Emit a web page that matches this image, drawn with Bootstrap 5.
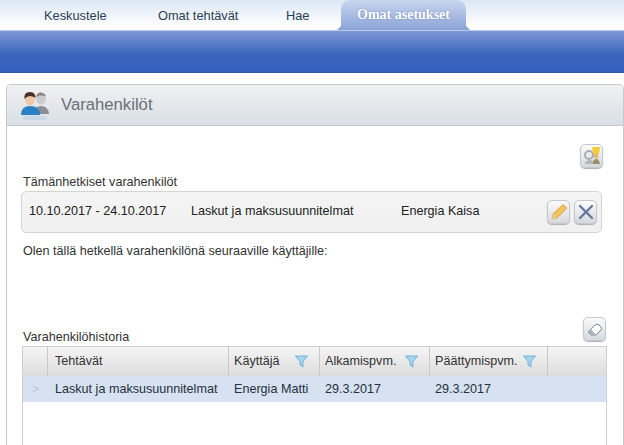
<!DOCTYPE html>
<html lang="fi">
<head>
<meta charset="utf-8">
<title>Varahenkilöt</title>
<link href="https://cdn.jsdelivr.net/npm/bootstrap@5.3.0/dist/css/bootstrap.min.css" rel="stylesheet">
<style>
html,body{height:445px;overflow:hidden;background:#fff}
body{font-family:"Liberation Sans",Arial,sans-serif;font-size:12.6px;color:#333;line-height:15px}
.topnav{height:31px;background:linear-gradient(#dce7f6,#fff 90%);border-bottom:1px solid #b9c8e4;padding-left:44px}
.topitem{color:#2b3f55;font-size:12.8px;text-decoration:none;line-height:31px}
.tab1{width:114px}.tab2{width:128px}.tab3{width:55px}
.topactive{width:125px;height:30px;background:linear-gradient(#c9d6ee,#8ba3d6);border-radius:9px 9px 0 0;color:#fff;font-family:"Liberation Serif",serif;font-weight:700;font-size:14px;text-align:center;line-height:30px;text-shadow:0 0 2px #6f87bb}
.topactive::before,.topactive::after{content:"";position:absolute;bottom:0;width:5px;height:5px;background:#8ba3d6}
.topactive::before{left:-4px;clip-path:polygon(100% 0,100% 100%,0 100%)}
.topactive::after{right:-4px;clip-path:polygon(0 0,100% 100%,0 100%)}
.band{height:42px;background:linear-gradient(#7e99d6,#3a64bd 58%,#3561bc);border-bottom:1px solid #2f57ad}
.panel{margin:11px 0 0 6px;width:618px;border:1px solid #c9c9c9;border-bottom:0;border-radius:5px 5px 0 0;background:#fff}
.panelhead{height:41px;background:linear-gradient(#f0f1f3,#d9dfe4);border-bottom:1px solid #c6c9cc;border-radius:5px 5px 0 0;padding-left:13px;gap:9px}
.paneltitle{font-size:16.7px;color:#6b7178;padding-top:1px}
.panelbody{padding:18px 15px 0 16px}
.rowend{height:24px;padding-right:5px}
.iconbtn{width:23px;height:24px;border:1px solid #c4c8cc;border-radius:5px;background:linear-gradient(#fafbfc,#d5d8dc);box-shadow:0 1px 1px #a9adb3;padding:0}
.lbl1{margin-top:7px;line-height:15px}
.curbox{width:581px;height:42px;margin:1px 0 0 -2px;background:linear-gradient(#f4f4f4,#f0f0f0);border:1px solid #d4d4d4;border-radius:5px;padding:0 4px 0 7px;color:#222}
.c1,.c2,.c3{padding-bottom:2px}
.c1{width:162px}.c2{width:210px}.c3{flex:1}
.gapbtn{gap:4px}
.lbl2{margin-top:11px;height:73px}
.histhead{width:583px;height:24px}
.hlabel{margin-bottom:-4px}
.hist{width:585px;margin:5px 0 0 -1px;border:1px solid #cfcfcf;border-bottom:0;height:120px}
.hrow{height:29px;background:linear-gradient(#f5f5f5,#dcdcdc);color:#333}
.hcell{border-right:1px solid #c9c9c9;padding-left:5px;padding-right:11px;line-height:29px}
.w0{width:25px}.w1{width:181px}.w2{width:91px}.w3{width:110px}.w4{width:118px}
.w1.hcell{padding-left:7px}
.drow{height:26px;background:#d6e2f2;line-height:26px;color:#26303b}
.dcell{padding-left:5px;white-space:nowrap}
.dcell.w0{padding-left:9px;color:#b9c3cf}
.w1.dcell{padding-left:7px}
.filt{display:block;flex:none}
</style>
</head>
<body>
<nav class="topnav d-flex align-items-start">
  <a class="topitem tab1" href="#">Keskustele</a>
  <a class="topitem tab2" href="#">Omat tehtävät</a>
  <a class="topitem tab3" href="#">Hae</a>
  <a class="topactive position-relative text-decoration-none" href="#">Omat asetukset</a>
</nav>
<div class="band"></div>
<section class="panel">
  <header class="panelhead d-flex align-items-center">
    <svg width="32" height="34" viewBox="0 0 32 34">
      <ellipse cx="21" cy="11" rx="5" ry="5.500" fill="#c9cccf"/>
      <path d="M16 9q1-5 5-4.500 4 .5 5 4-5-2-10 .5z" fill="#8b8480"/>
      <path d="M13 26q1-8 8-8 7 0 8 8z" fill="#8b8f95"/>
      <ellipse cx="10" cy="11.500" rx="5" ry="6" fill="#eec9a8"/>
      <path d="M4.500 11q-1-7 5.500-7 5.500 0 5.500 6-3-2-5.500-2-3 0-5.500 3z" fill="#4a2f22"/>
      <path d="M1 27q0-9 9-9 10 0 10 9z" fill="#2b7fc2"/>
      <rect x="3" y="28" width="24" height="4" rx="2" fill="#c9d8e4"/>
    </svg>
    <h1 class="paneltitle m-0 fw-normal">Varahenkilöt</h1>
  </header>
  <div class="panelbody">
    <div class="rowend d-flex justify-content-end">
      <button class="iconbtn d-flex align-items-center justify-content-center" type="button" aria-label="Lisää">
        <svg width="20" height="20" viewBox="0 0 20 20">
          <circle cx="7" cy="9" r="4" fill="none" stroke="#a8acb1" stroke-width="2"/>
          <path d="M3 18q1-4 5-4t4 4z" fill="#b4b7bb"/>
          <path d="M10 1h8l-1 7h-6z" fill="#f4cd3a"/>
          <circle cx="14" cy="10" r="2.500" fill="#e8b56f"/>
          <path d="M11 18q0-5 3-5t4 5z" fill="#9b8f6a"/>
        </svg>
      </button>
    </div>
    <div class="lbl1">Tämänhetkiset varahenkilöt</div>
    <div class="curbox d-flex align-items-center">
      <span class="c1">10.10.2017 - 24.10.2017</span>
      <span class="c2">Laskut ja maksusuunnitelmat</span>
      <span class="c3">Energia Kaisa</span>
      <div class="d-flex gapbtn">
        <button class="iconbtn d-flex align-items-center justify-content-center" type="button" aria-label="Muokkaa">
          <svg width="20" height="20" viewBox="0 0 20 20">
            <path d="M3 17l1-5L14 2.500l4 3.500L8 16z" fill="#f2c25c" stroke="#d49d36" stroke-width=".8"/>
            <path d="M3 17l1-5 4 4z" fill="#e3c9a0"/>
          </svg>
        </button>
        <button class="iconbtn d-flex align-items-center justify-content-center" type="button" aria-label="Poista">
          <svg width="18" height="18" viewBox="0 0 18 18">
            <path d="M3 3l12 12M15 3L3 15" stroke="#64799f" stroke-width="2.400" stroke-linecap="round"/>
          </svg>
        </button>
      </div>
    </div>
    <div class="lbl2">Olen tällä hetkellä varahenkilönä seuraaville käyttäjille:</div>
    <div class="histhead d-flex justify-content-between align-items-end">
      <div class="hlabel">Varahenkilöhistoria</div>
      <button class="iconbtn d-flex align-items-center justify-content-center" type="button" aria-label="Tyhjennä">
        <svg width="20" height="20" viewBox="0 0 20 20">
          <path d="M3 13l7-7q2-1.500 4 0l2 2q1 2 0 3l-5 5H6z" fill="#fff" stroke="#7d8794" stroke-width="1"/>
          <path d="M3 13l3-3 5 6H6z" fill="#aab6c6"/>
        </svg>
      </button>
    </div>
    <div class="hist">
      <div class="hrow d-flex">
        <div class="hcell w0"></div>
        <div class="hcell w1">Tehtävät</div>
        <div class="hcell w2 d-flex align-items-center justify-content-between">Käyttäjä
          <svg class="filt" width="13" height="13" viewBox="0 0 13 13"><path d="M.5 1h12L8 6.500V12L5 10V6.500z" fill="#a6d5ef" stroke="#5ba6d2" stroke-width=".8"/></svg></div>
        <div class="hcell w3 d-flex align-items-center justify-content-between">Alkamispvm.
          <svg class="filt" width="13" height="13" viewBox="0 0 13 13"><path d="M.5 1h12L8 6.500V12L5 10V6.500z" fill="#a6d5ef" stroke="#5ba6d2" stroke-width=".8"/></svg></div>
        <div class="hcell w4 d-flex align-items-center justify-content-between">Päättymispvm.
          <svg class="filt" width="13" height="13" viewBox="0 0 13 13"><path d="M.5 1h12L8 6.500V12L5 10V6.500z" fill="#a6d5ef" stroke="#5ba6d2" stroke-width=".8"/></svg></div>
      </div>
      <div class="drow d-flex">
        <div class="dcell w0">&gt;</div>
        <div class="dcell w1">Laskut ja maksusuunnitelmat</div>
        <div class="dcell w2">Energia Matti</div>
        <div class="dcell w3">29.3.2017</div>
        <div class="dcell w4">29.3.2017</div>
      </div>
    </div>
  </div>
</section>
<script src="https://cdn.jsdelivr.net/npm/bootstrap@5.3.0/dist/js/bootstrap.bundle.min.js"></script>
</body>
</html>
